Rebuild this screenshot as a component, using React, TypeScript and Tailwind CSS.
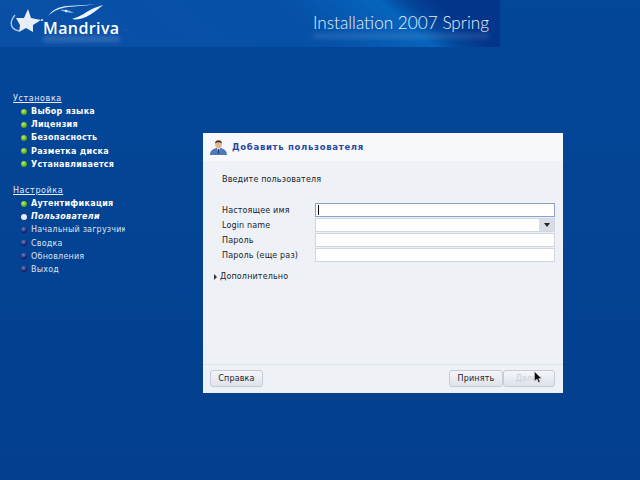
const installSteps = [
  { label: 'Выбор языка', state: 'done' },
  { label: 'Лицензия', state: 'done' },
  { label: 'Безопасность', state: 'done' },
  { label: 'Разметка диска', state: 'done' },
  { label: 'Устанавливается', state: 'done' },
]

const setupSteps = [
  { label: 'Аутентификация', state: 'done' },
  { label: 'Пользователи', state: 'current' },
  { label: 'Начальный загрузчик', state: 'todo' },
  { label: 'Сводка', state: 'todo' },
  { label: 'Обновления', state: 'todo' },
  { label: 'Выход', state: 'todo' },
]

const fields = ['Настоящее имя', 'Login name', 'Пароль', 'Пароль (еще раз)']

function Bullet({ state }: { state: string }) {
  if (state === 'done') {
    return <span className="w-[6px] h-[6px] rounded-full shrink-0 bg-[radial-gradient(circle_at_40%_35%,#c0f060,#4a9a10_75%)]" />
  }
  if (state === 'current') {
    return <span className="w-[6px] h-[6px] rounded-full shrink-0 bg-[#e8ecf8]" />
  }
  return <span className="w-[6px] h-[6px] rounded-full shrink-0 bg-[radial-gradient(circle_at_40%_30%,#7a80c8,#141c60_65%)]" />
}

function StepGroup({ title, steps }: { title: string; steps: { label: string; state: string }[] }) {
  return (
    <div className="flex flex-col">
      <div className="h-[13px] leading-[13px] text-[8px] tracking-[0.6px] text-[#e4eaf7] underline">{title}</div>
      {steps.map((step) => (
        <div key={step.label} className="flex items-center h-[13.2px] pl-[8px] gap-[4px] whitespace-nowrap">
          <Bullet state={step.state} />
          <span
            className={
              'text-[8px] leading-[13px] ' +
              (step.state === 'done'
                ? 'font-bold tracking-[0.3px] text-white'
                : step.state === 'current'
                  ? 'font-bold italic tracking-[0.3px] text-white'
                  : 'tracking-[0.2px] text-[#dbe3f4]')
            }
          >
            {step.label}
          </span>
        </div>
      ))}
    </div>
  )
}

function Banner() {
  return (
    <div className="relative w-[500px] h-[47px] overflow-hidden bg-[linear-gradient(40deg,#0a4fa6_0%,#0650a8_60%,#0664bc_78%,#03459a_83%,#03368a_88%,#03358a_100%)]">
      <svg className="absolute left-0 top-0" width="110" height="40" viewBox="0 0 110 40">
        <path d="M48 16 C52 10 58 7 66 6 C78 5 92 5 105 3 C92 5 80 6 68 7 C60 8 53 11 48 16 Z" fill="#d4e4f6" />
        <path d="M72 19 C80 17 86 12 92 9 C96 7 100 6 103 5 C98 9 92 14 86 17 C81 19 76 20 72 19 Z" fill="#eef5fc" />
        <path d="M60 10 C64 9 70 10 74 13 C70 13 64 12 60 10 Z" fill="#8db6e2" />
        <circle cx="66" cy="11" r="1.2" fill="#e4effa" />
        <path d="M28 9 L31 18 L41 20 L33 25 L33 32 L26 28 L19 32 L20 25 L16 18 L24 18 Z" fill="#e6eff9" />
        <path d="M15 15 C9 22 10 30 20 31" stroke="#a8c6ea" strokeWidth="1.4" fill="none" />
        <circle cx="42" cy="20" r="1.1" fill="#dcebfa" />
      </svg>
      <div className="absolute left-[43px] top-[21px] text-[16px] leading-[14px] tracking-[0.4px] text-white font-['Open_Sans',sans-serif] font-semibold">
        Mandriva
      </div>
      {/* soft reflection under the logo and the title */}
      <div className="absolute left-[43px] top-[36px] w-[77px] h-[6px] bg-white/15 blur-[2px]" />
      <div className="absolute left-[313px] top-[15px] text-[17.2px] leading-[15px] text-[#e6f0fb] font-['Lato',sans-serif] font-light whitespace-nowrap">
        Installation 2007 Spring
      </div>
      <div className="absolute left-[313px] top-[33px] w-[176px] h-[6px] bg-white/10 blur-[2px]" />
    </div>
  )
}

function UserIcon() {
  return (
    <svg width="19" height="18" viewBox="0 0 19 18" className="shrink-0">
      <path d="M1 17 C1 12 5 11 7 10 L12 10 C14 11 18 12 18 17 Z" fill="#4f79b8" />
      <path d="M8 10 L9.5 15 L11 10 Z" fill="#f2f4f8" />
      <path d="M9 11 L10 11 L10.2 15 L9.5 16 L8.8 15 Z" fill="#223a6a" />
      <ellipse cx="9.5" cy="6" rx="3.4" ry="4.2" fill="#e3b48c" />
      <path d="M6 5.5 C6 1.5 13 1.5 13 5.5 C11.5 3.8 7.5 3.8 6 5.5 Z" fill="#2b2b33" />
    </svg>
  )
}

function Button({ label, disabled, width }: { label: string; disabled?: boolean; width: string }) {
  return (
    <button
      className={
        width +
        ' h-[17px] rounded-[3px] border border-[#c6ccd6] bg-[linear-gradient(#f4f6f9,#dfe3ea)] text-[8px] tracking-[0.15px] leading-none ' +
        (disabled ? 'text-[#c8ced8]' : 'text-[#20242c]')
      }
    >
      {label}
    </button>
  )
}

function Dialog() {
  return (
    <div className="relative flex flex-col w-[360px] h-[260px] bg-[#eef1f6] text-[8px] tracking-[0.15px] text-[#20242c]">
      <div className="flex items-center h-[28px] pl-[6px] gap-[4px] bg-[#f6f8fb]">
        <UserIcon />
        <span className="text-[8.5px] font-bold tracking-[0.7px] text-[#2748a0]">Добавить пользователя</span>
      </div>
      <div className="pl-[19px] pt-[12px] h-[42px] leading-[13px]">Введите пользователя</div>
      <div className="flex flex-col gap-[1px] pl-[19px] pr-[8px]">
        {fields.map((field, i) => (
          <div key={field} className="flex items-center h-[14px]">
            <span className="w-[93px] pt-[1px] leading-[13px]">{field}</span>
            <div
              className={
                'relative flex-1 h-[14px] bg-white border ' +
                (i === 0 ? 'border-[#8f9fcc]' : 'border-[#d0d6e0]')
              }
            >
              {i === 0 && <span className="absolute left-[2px] top-[1px] w-px h-[10px] bg-black" />}
              {i === 1 && (
                <span className="absolute right-0 top-0 w-[15px] h-full flex items-center justify-center bg-[#d8dde5]">
                  <span className="w-0 h-0 border-x-[3px] border-x-transparent border-t-[4px] border-t-[#20242c]" />
                </span>
              )}
            </div>
          </div>
        ))}
      </div>
      <div className="flex items-center pl-[11px] gap-[3px] mt-[8px] h-[13px]">
        <span className="w-0 h-0 border-y-[3px] border-y-transparent border-l-[3px] border-l-[#30343c]" />
        <span>Дополнительно</span>
      </div>
      <div className="flex-1" />
      <div className="h-px bg-[#dde1e8]" />
      <div className="flex items-start justify-between pl-[7px] pr-[8px] pt-[5px] h-[28px]">
        <Button label="Справка" width="w-[53px]" />
        <div className="flex">
          <Button label="Принять" width="w-[54px]" />
          <Button label="Далее" disabled width="w-[52px]" />
        </div>
      </div>
      <svg className="absolute left-[331px] top-[238px]" width="9" height="13" viewBox="0 0 9 13">
        <path d="M0.5 0.5 L0.5 10 L3 8 L4.5 11.5 L6 11 L4.6 7.6 L7.5 7.5 Z" fill="#111" stroke="#eee" strokeWidth="0.4" />
      </svg>
    </div>
  )
}

export default function App() {
  return (
    <div className="w-[640px] h-[480px] overflow-hidden bg-[linear-gradient(#03479a,#033f8c)] font-['DejaVu_Sans',sans-serif]">
      <Banner />
      <div className="flex items-start">
        <div className="w-[112px] ml-[13px] mt-[45px] overflow-hidden flex flex-col gap-[13px] shrink-0">
          <StepGroup title="Установка" steps={installSteps} />
          <StepGroup title="Настройка" steps={setupSteps} />
        </div>
        <div className="ml-[78px] mt-[86px]">
          <Dialog />
        </div>
      </div>
    </div>
  )
}
